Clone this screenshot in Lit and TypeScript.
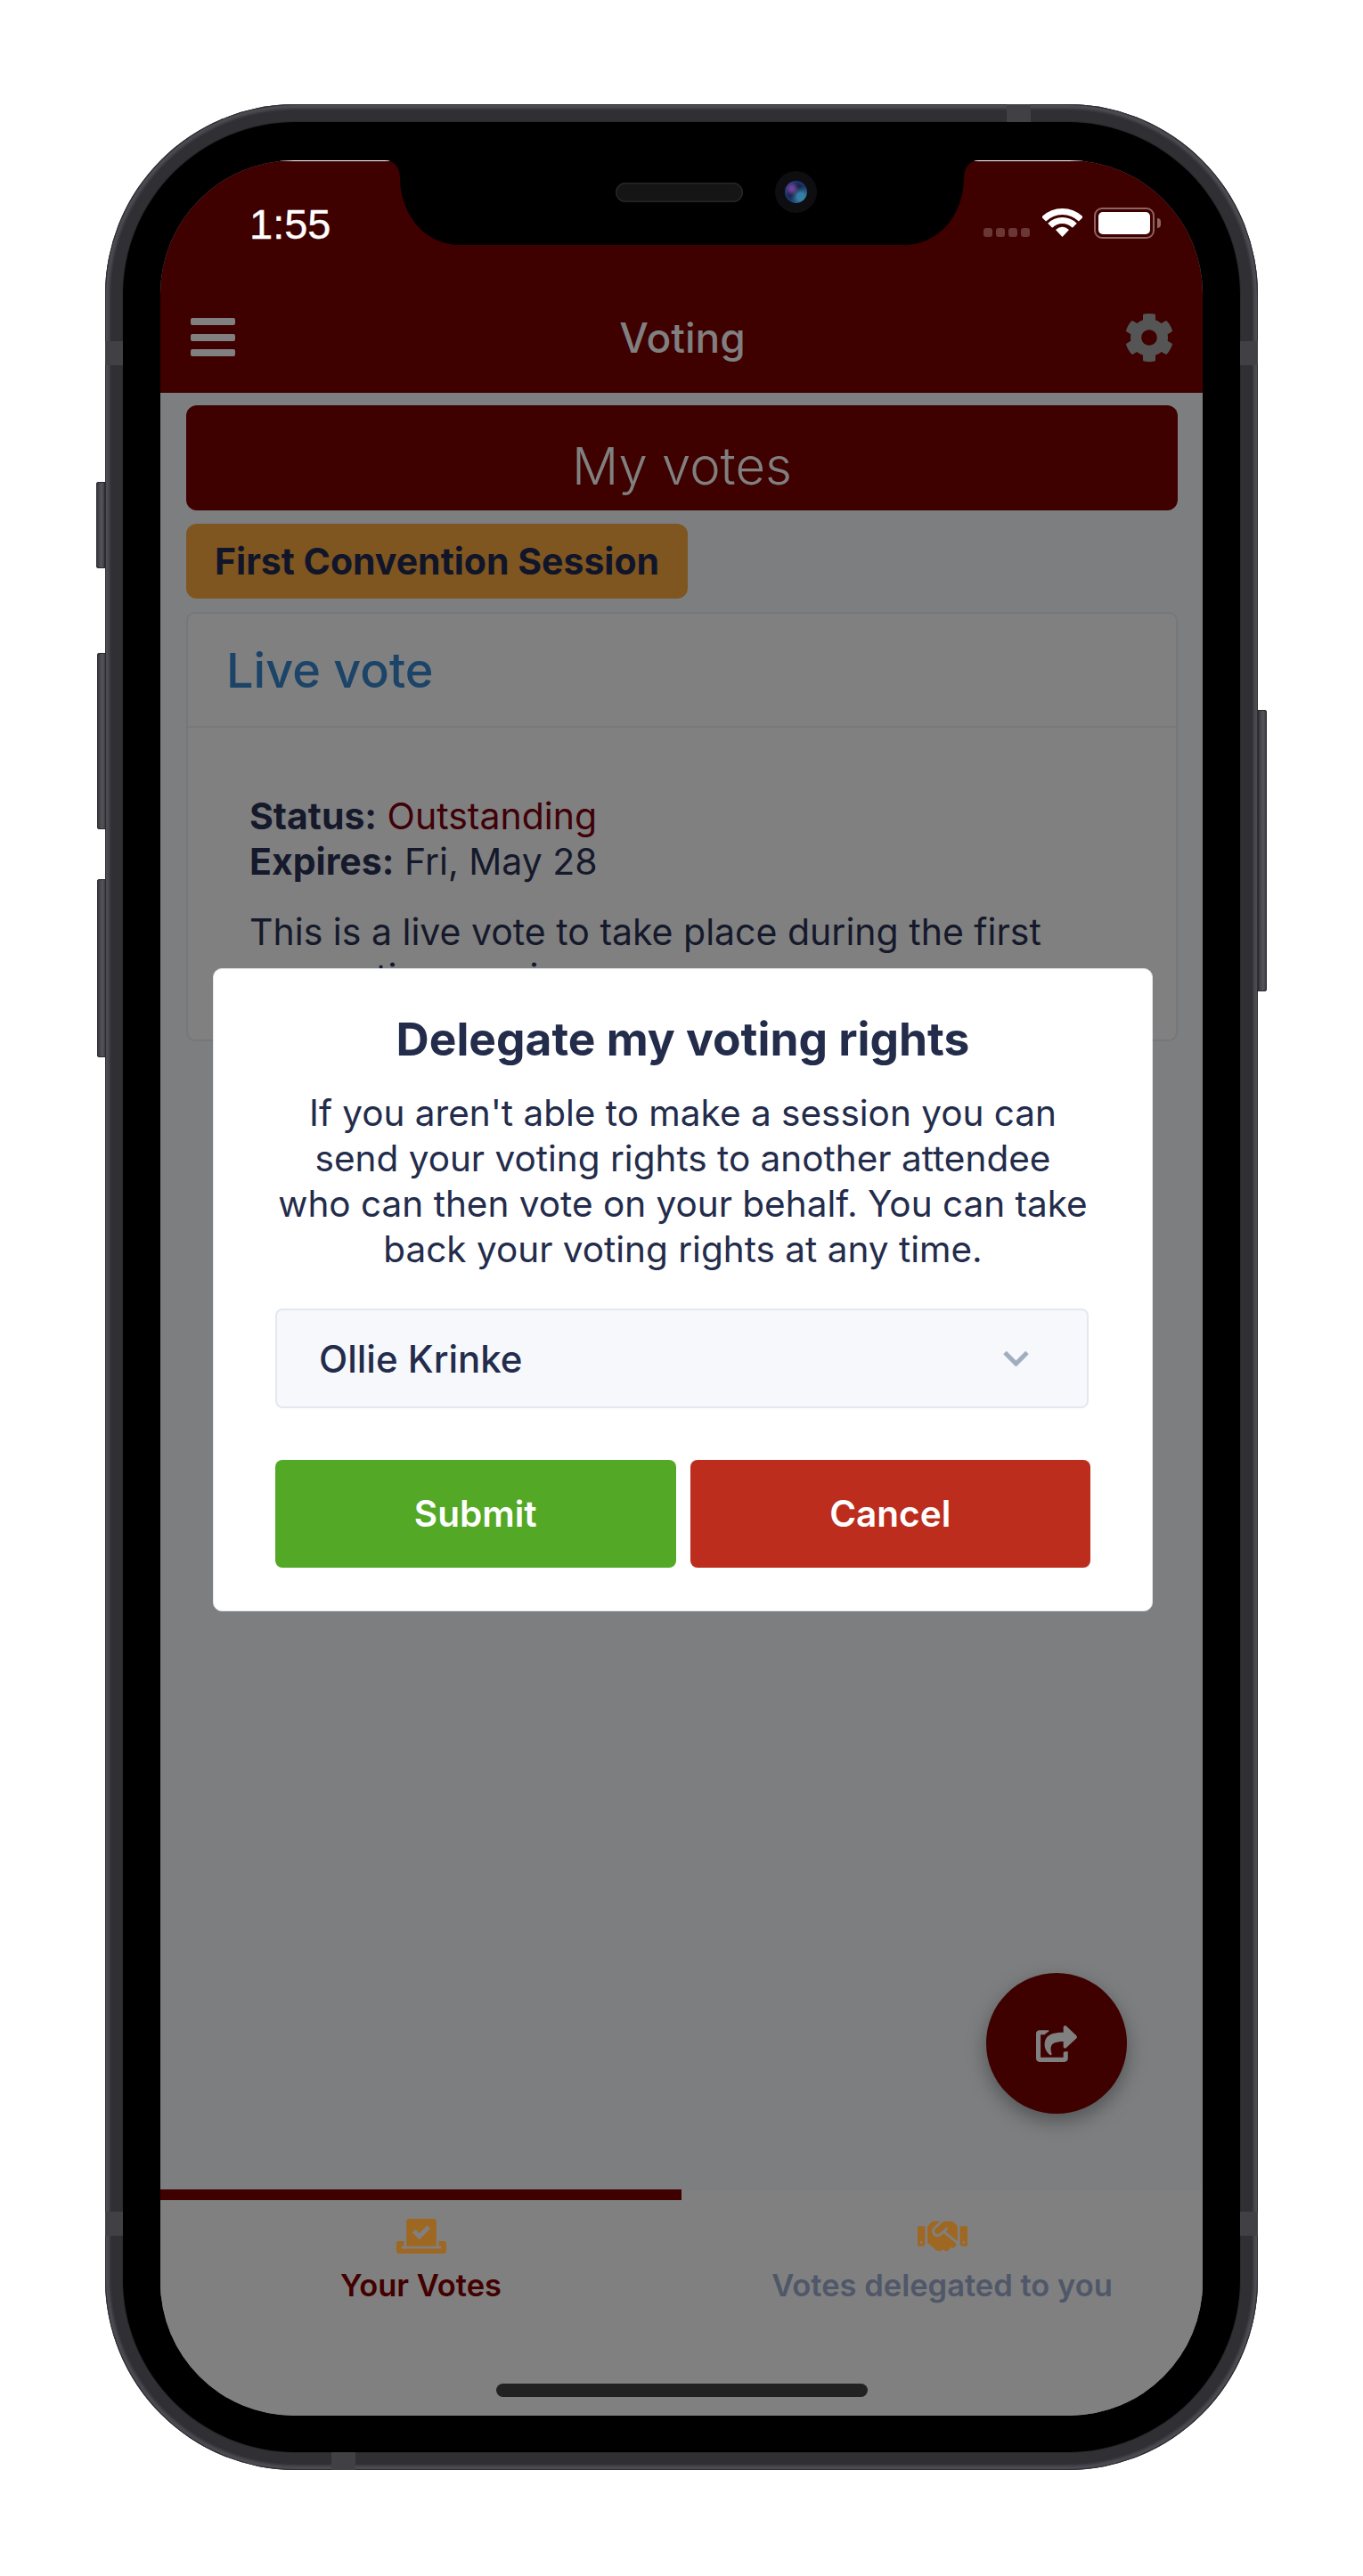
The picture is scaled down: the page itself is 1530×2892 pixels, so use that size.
import { css, html, LitElement, svg } from 'lit'
import { customElement } from 'lit/decorators.js'

const COG =
  'M487.4 315.7l-42.6-24.6c4.3-23.2 4.3-47 0-70.2l42.6-24.6c4.9-2.8 7.1-8.6 5.5-14-11.1-35.6-30-67.8-54.7-94.6-3.8-4.1-10-5.1-14.8-2.3L380.8 110c-17.9-15.4-38.5-27.3-60.8-35.1V25.8c0-5.6-3.9-10.5-9.4-11.7-36.7-8.2-74.3-7.8-109.2 0-5.5 1.2-9.4 6.1-9.4 11.7V75c-22.2 7.9-42.8 19.8-60.8 35.1L88.7 85.5c-4.9-2.8-11-1.9-14.8 2.3-24.7 26.7-43.6 58.9-54.7 94.6-1.7 5.4.6 11.2 5.5 14L67.3 221c-4.3 23.2-4.3 47 0 70.2l-42.6 24.6c-4.9 2.8-7.1 8.6-5.5 14 11.1 35.6 30 67.8 54.7 94.6 3.8 4.1 10 5.1 14.8 2.3l42.6-24.6c17.9 15.4 38.5 27.3 60.8 35.1v49.2c0 5.6 3.9 10.5 9.4 11.7 36.7 8.2 74.3 7.8 109.2 0 5.5-1.2 9.4-6.1 9.4-11.7v-49.2c22.2-7.9 42.8-19.8 60.8-35.1l42.6 24.6c4.9 2.8 11 1.9 14.8-2.3 24.7-26.7 43.6-58.9 54.7-94.6 1.5-5.5-.7-11.3-5.6-14.1zM256 336c-44.1 0-80-35.9-80-80s35.9-80 80-80 80 35.9 80 80-35.9 80-80 80z'
const SHARE =
  'M568.5 177.4L424.5 313.4C409.3 327.8 384 317.1 384 296v-72c-144.6 1-205.6 35.1-164.8 171.4 4.5 15-12.8 26.6-25 17.3C155.3 383.1 120 326.5 120 269.3c0-143.9 117.6-172.5 264-173.3V24c0-21.2 25.3-31.8 40.5-17.4l144 136c10 9.4 10 25.4 0 34.8zM384 379.1V448H64V128h50.9c3.3 0 6.4-1.3 8.6-3.7 15-15.6 32.3-27.9 51-37.7C186.7 80.3 182.2 64 168.5 64H48C21.5 64 0 85.5 0 112v352c0 26.5 21.5 48 48 48h352c26.5 0 48-21.5 48-48v-88.8c0-8.3-8.2-14-16-11.3-4.5 1.6-9.3 2.5-14 3.1-9.5 1.2-34 3.2-34 14.1z'
const VOTE =
  'M608 320h-64v64h22.4c5.3 0 9.6 3.6 9.6 8v16c0 4.4-4.3 8-9.6 8H73.6c-5.3 0-9.6-3.6-9.6-8v-16c0-4.4 4.3-8 9.6-8H96v-64H32c-17.7 0-32 14.3-32 32v96c0 17.7 14.3 32 32 32h576c17.7 0 32-14.3 32-32v-96c0-17.7-14.3-32-32-32zm-96 64V64.3c0-17.9-14.5-32.3-32.3-32.3H160.4C142.5 32 128 46.5 128 64.3V384h384zM211.2 202l25.5-25.3c4.2-4.2 11-4.2 15.2.1l41.3 41.6 95.2-94.4c4.2-4.2 11-4.2 15.2.1l25.3 25.5c4.2 4.2 4.2 11-.1 15.2L300.5 292c-4.2 4.2-11 4.2-15.2-.1l-74.1-74.8c-4.3-4.2-4.2-11 0-15.1z'
const HANDSHAKE =
  'M434.7 64h-85.9c-8 0-15.7 3-21.6 8.4l-98.3 90c-.1.1-.2.3-.3.4-16.6 15.6-16.3 40.5-2.1 56 12.7 13.9 39.4 17.6 56.1 2.7.1-.1.3-.1.4-.2l79.9-73.2c6.5-5.9 16.7-5.5 22.6 1 6 6.5 5.5 16.6-1 22.6l-26.1 23.9L504 313.8c2.9 2.4 5.5 5 7.9 7.7V128l-54.6-54.6c-5.9-6-14.1-9.4-22.6-9.4zM544 128.2v223.9c0 17.7 14.3 32 32 32h64V128.2h-96zm48 223.9c-8.8 0-16-7.2-16-16s7.2-16 16-16 16 7.2 16 16-7.2 16-16 16zM0 384h64c17.7 0 32-14.3 32-32V128.2H0V384zm48-63.9c8.8 0 16 7.2 16 16s-7.2 16-16 16-16-7.2-16-16c0-8.9 7.2-16 16-16zm435.9 18.6L334.6 217.5l-30 27.5c-29.7 27.1-75.2 24.5-101.7-4.4-26.9-29.4-24.8-74.9 4.4-101.7L289.1 64h-83.8c-8.5 0-16.6 3.4-22.6 9.4L128 128v223.9h18.3l90.5 81.9c27.4 22.3 67.7 18.1 90-9.3l.2-.2 17.9 15.5c15.9 13 39.4 10.5 52.3-5.4l31.4-38.6 5.4 4.4c13.7 11.1 33.9 9.1 45-4.7l9.5-11.7c11.2-13.8 9.1-33.9-4.6-45.1z'

const faIcon = (d: string, w: number, h = 512) =>
  html`<svg viewBox="0 0 ${w} ${h}" fill="currentColor">${svg`<path d=${d}></path>`}</svg>`

@customElement('app-root')
export class AppRoot extends LitElement {
  static styles = css`
    :host {
      display: block;
      width: 1530px;
      height: 2892px;
      background: #fff;
      font-family: Inter, 'Noto Sans', sans-serif;
      color: #15192b;
      overflow: hidden;
    }
    * {
      box-sizing: border-box;
    }

    /* device */
    .phone {
      position: relative;
      width: 1294px;
      height: 2656px;
      margin: 117px 0 0 118px;
      padding: 20px;
      border-radius: 214px;
      background: #2f2f34;
      box-shadow:
        inset 0 0 0 1px #2c2c31,
        inset 0 0 3px 5px #4c4c52;
    }
    .bezel {
      height: 100%;
      padding: 43px 42px 41px;
      border-radius: 194px;
      background: #000;
      box-shadow: 0 0 0 1px #29292c;
    }
    .screen {
      position: relative;
      display: flex;
      flex-direction: column;
      width: 1170px;
      height: 2532px;
      border-radius: 150px;
      overflow: hidden;
      background: #7c7e80;
    }
    .side {
      position: absolute;
      width: 10px;
      background: linear-gradient(90deg, #333338, #55555b 60%, #333338);
      box-shadow: inset 0 0 0 1px #2a2a2e;
    }
    .side.l {
      left: -9px;
      border-radius: 3px 0 0 3px;
    }
    .side.r {
      right: -10px;
      top: 680px;
      height: 316px;
      border-radius: 0 3px 3px 0;
    }
    .side.mute {
      left: -10px;
      top: 424px;
      height: 97px;
    }
    .side.up {
      top: 616px;
      height: 198px;
    }
    .side.down {
      top: 870px;
      height: 200px;
    }
    .band {
      position: absolute;
      background: #404045;
    }
    .band.h {
      width: 20px;
      height: 27px;
    }
    .band.v {
      width: 27px;
      height: 20px;
    }
    .notch {
      position: absolute;
      left: 314px;
      top: 63px;
      width: 667px;
      height: 95px;
      color: #000;
    }
    .notch svg {
      display: block;
      width: 100%;
      height: 100%;
    }
    .speaker {
      position: absolute;
      left: 573px;
      top: 88px;
      width: 143px;
      height: 22px;
      border-radius: 11px;
      background: #151516;
      box-shadow: inset 0 0 0 1.5px #262628;
    }
    .camera {
      position: absolute;
      left: 752px;
      top: 75px;
      width: 47px;
      height: 47px;
      padding: 11px;
      border-radius: 50%;
      background: #0e0e10;
    }
    .lens {
      display: block;
      width: 25px;
      height: 25px;
      border-radius: 50%;
      background:
        radial-gradient(circle at 32% 35%, #6a4298 0 10%, transparent 36%),
        radial-gradient(circle at 72% 72%, #357fa6 0 16%, transparent 48%),
        radial-gradient(circle, #0b1020 0 25%, #1f3a78 70%, #172a55);
    }

    /* app header */
    .header {
      flex: none;
      display: flex;
      flex-direction: column;
      height: 261px;
      background: #3f0000;
      border-top: 1px solid #fff;
      color: #808080;
    }
    .status {
      flex: none;
      display: flex;
      align-items: flex-start;
      justify-content: space-between;
      height: 166px;
      padding: 48px 54px 0 100px;
    }
    .time {
      font-family: 'Liberation Sans', sans-serif;
      font-size: 47px;
      line-height: 46px;
      color: #fff;
      width: 93px;
      -webkit-text-stroke: 0.4px #fff;
    }
    .status-icons {
      display: flex;
      align-items: flex-start;
      padding-top: 4px;
    }
    .dots {
      display: flex;
      gap: 4px;
      margin: 23px 14px 0 0;
    }
    .dots i {
      width: 10px;
      height: 10px;
      border-radius: 3px;
      background: #6b3636;
    }
    .wifi {
      width: 45px;
      height: 33px;
      margin: 0 13px 0 0;
    }
    .battery {
      position: relative;
      width: 68px;
      height: 35px;
      padding: 3px;
      border: 2px solid #8d6464;
      border-radius: 9px;
    }
    .battery i {
      display: block;
      height: 100%;
      border-radius: 5px;
      background: #fff;
    }
    .battery::after {
      content: '';
      position: absolute;
      right: -9px;
      top: 10px;
      width: 4px;
      height: 11px;
      border-radius: 0 4px 4px 0;
      background: #8d6464;
    }
    .nav {
      flex: 1;
      display: grid;
      grid-template-columns: 1fr auto 1fr;
      align-items: start;
      padding: 10px 32px 0 34px;
    }
    .burger {
      display: flex;
      flex-direction: column;
      gap: 9.5px;
      width: 50px;
    }
    .burger i {
      height: 8px;
      border-radius: 2px;
      background: #808080;
    }
    .nav-title {
      font-size: 46px;
      font-weight: 500;
      line-height: 56px;
      margin-top: -6px;
    }
    .gear {
      justify-self: end;
      width: 56px;
      height: 56px;
      margin-top: -6px;
      color: #555;
    }
    svg {
      display: block;
    }

    /* page */
    .main {
      flex: 1;
      padding: 14px 28px 0 29px;
    }
    .hero {
      display: flex;
      align-items: center;
      justify-content: center;
      height: 118px;
      padding-top: 17px;
      border-radius: 12px;
      background: #3f0000;
      color: #808080;
      font-size: 58px;
      font-weight: 300;
    }
    .badge {
      display: inline-flex;
      align-items: center;
      height: 84px;
      margin-top: 15px;
      padding: 0 32px;
      border-radius: 12px;
      background: #7f5520;
      color: #10152a;
      font-size: 41px;
      font-weight: 700;
      white-space: nowrap;
    }
    .card {
      height: 482px;
      margin-top: 15px;
      border: 2px solid #75777c;
      border-radius: 10px;
      background: #808080;
      overflow: hidden;
    }
    .card-head {
      height: 128px;
      padding: 32px 0 0 43px;
      border-bottom: 2px solid #76787c;
      color: #1b4468;
      font-size: 54px;
      font-weight: 500;
      line-height: 64px;
    }
    .card-body {
      padding: 74px 70px 0 69px;
      font-size: 41px;
      line-height: 51px;
    }
    .card-body b {
      font-weight: 700;
    }
    .card-body p {
      margin: 28px 0 0;
    }
    .outstanding {
      color: #400008;
    }

    /* tabs */
    .tabs {
      flex: none;
      display: grid;
      grid-template-columns: 585px 1fr;
      height: 254px;
      background: #808080;
      box-shadow: 0 -1px 0 #7a7c7e;
    }
    .tab {
      display: flex;
      flex-direction: column;
      align-items: center;
      padding-top: 18px;
      border-top: 12px solid transparent;
      color: #4f5769;
      font-size: 34.5px;
      font-weight: 600;
    }
    .tab.active {
      border-top-color: #3f0000;
      color: #430000;
    }
    .tab svg {
      width: 56px;
      height: 45px;
      color: #9e6722;
    }
    .tab span {
      margin-top: 13px;
      line-height: 40px;
    }
    .home {
      position: absolute;
      left: 377px;
      top: 2496px;
      width: 417px;
      height: 15px;
      border-radius: 8px;
      background: #222;
    }

    /* floating */
    .fab {
      position: absolute;
      right: 85px;
      bottom: 339px;
      display: flex;
      align-items: center;
      justify-content: center;
      width: 158px;
      height: 158px;
      border-radius: 50%;
      background: #3f0000;
      box-shadow: 0 8px 22px rgba(0, 0, 0, 0.35);
      color: #808080;
    }
    .fab svg {
      width: 46px;
      height: 41px;
    }

    /* modal */
    .modal {
      position: absolute;
      left: 59px;
      top: 907px;
      width: 1055px;
      height: 722px;
      padding: 48px 69px 0;
      border: 1px solid #e2e8f0;
      border-radius: 10px;
      background: #fff;
      color: #232c4b;
      text-align: center;
    }
    .modal h2 {
      margin: 0;
      font-size: 51.5px;
      font-weight: 700;
      line-height: 60px;
    }
    .modal p {
      margin: 28px 0 0;
      font-size: 40.5px;
      line-height: 51px;
    }
    .select {
      display: flex;
      align-items: center;
      justify-content: space-between;
      height: 112px;
      margin: 41px 2px 0 0;
      padding: 0 65px 0 47px;
      border: 2px solid #e2e8f0;
      border-radius: 8px;
      background: #f7f8fc;
      font-size: 42px;
      font-weight: 500;
    }
    .chevron {
      width: 29px;
      height: 18px;
      color: #a0aec0;
    }
    .actions {
      display: flex;
      gap: 16px;
      margin-top: 58px;
    }
    .btn {
      flex: 1;
      display: flex;
      align-items: center;
      justify-content: center;
      height: 121px;
      border-radius: 8px;
      color: #fff;
      font-size: 40.5px;
      font-weight: 600;
    }
    .btn.ok {
      background: #53a925;
    }
    .btn.no {
      background: #bc2d1e;
    }
  `

  render() {
    return html`
      <div class="phone">
        <i class="side l mute"></i>
        <i class="side l up"></i>
        <i class="side l down"></i>
        <i class="side r"></i>
        <i class="band h" style="left:0;top:266px"></i>
        <i class="band h" style="right:0;top:266px"></i>
        <i class="band h" style="left:0;top:2366px"></i>
        <i class="band h" style="right:0;top:2366px"></i>
        <i class="band v" style="left:1012px;top:0"></i>
        <i class="band v" style="left:254px;bottom:0"></i>
        <div class="bezel">
          <div class="screen">
            <div class="header">
              <div class="status">
                <span class="time">1:55</span>
                <div class="status-icons">
                  <div class="dots"><i></i><i></i><i></i><i></i></div>
                  <svg class="wifi" viewBox="0 0 45 33" fill="none" stroke="#fff" stroke-width="7">
                    <path d="M1.6 13.1a29.5 29.5 0 0 1 41.8 0"></path>
                    <path d="M8.7 20.2a19.5 19.5 0 0 1 27.6 0"></path>
                    <path d="M22.5 33 L15 25 Q22.5 18.5 30 25 Z" fill="#fff" stroke="none"></path>
                  </svg>
                  <div class="battery"><i></i></div>
                </div>
              </div>
              <div class="nav">
                <div class="burger"><i></i><i></i><i></i></div>
                <div class="nav-title">Voting</div>
                <div class="gear">${faIcon(COG, 512)}</div>
              </div>
            </div>

            <div class="main">
              <div class="hero">My votes</div>
              <div class="badge">First Convention Session</div>
              <div class="card">
                <div class="card-head">Live vote</div>
                <div class="card-body">
                  <div><b>Status:</b> <span class="outstanding">Outstanding</span></div>
                  <div><b>Expires:</b> Fri, May 28</div>
                  <p>This is a live vote to take place during the first convention session.</p>
                </div>
              </div>
            </div>

            <div class="tabs">
              <div class="tab active">
                ${faIcon(VOTE, 640)}
                <span>Your Votes</span>
              </div>
              <div class="tab">
                ${faIcon(HANDSHAKE, 640)}
                <span>Votes delegated to you</span>
              </div>
            </div>
            <div class="home"></div>

            <div class="fab">${faIcon(SHARE, 576)}</div>

            <div class="modal">
              <h2>Delegate my voting rights</h2>
              <p>
                If you aren't able to make a session you can send your voting rights to another attendee who can then
                vote on your behalf. You can take back your voting rights at any time.
              </p>
              <div class="select">
                <span>Ollie Krinke</span>
                <svg class="chevron" viewBox="0 0 29 18" fill="none" stroke="currentColor" stroke-width="5">
                  <path d="M2 2.5 L14.5 15 L27 2.5"></path>
                </svg>
              </div>
              <div class="actions">
                <div class="btn ok">Submit</div>
                <div class="btn no">Cancel</div>
              </div>
            </div>
          </div>
        </div>
        <div class="notch">
          <svg viewBox="0 0 667 95" fill="currentColor">
            <path d="M0 0C10 0 17 7 17 20C17 55 40 95 85 95H582C627 95 650 55 650 20C650 7 657 0 667 0Z"></path>
          </svg>
        </div>
        <div class="speaker"></div>
        <div class="camera"><span class="lens"></span></div>
      </div>
    `
  }
}
